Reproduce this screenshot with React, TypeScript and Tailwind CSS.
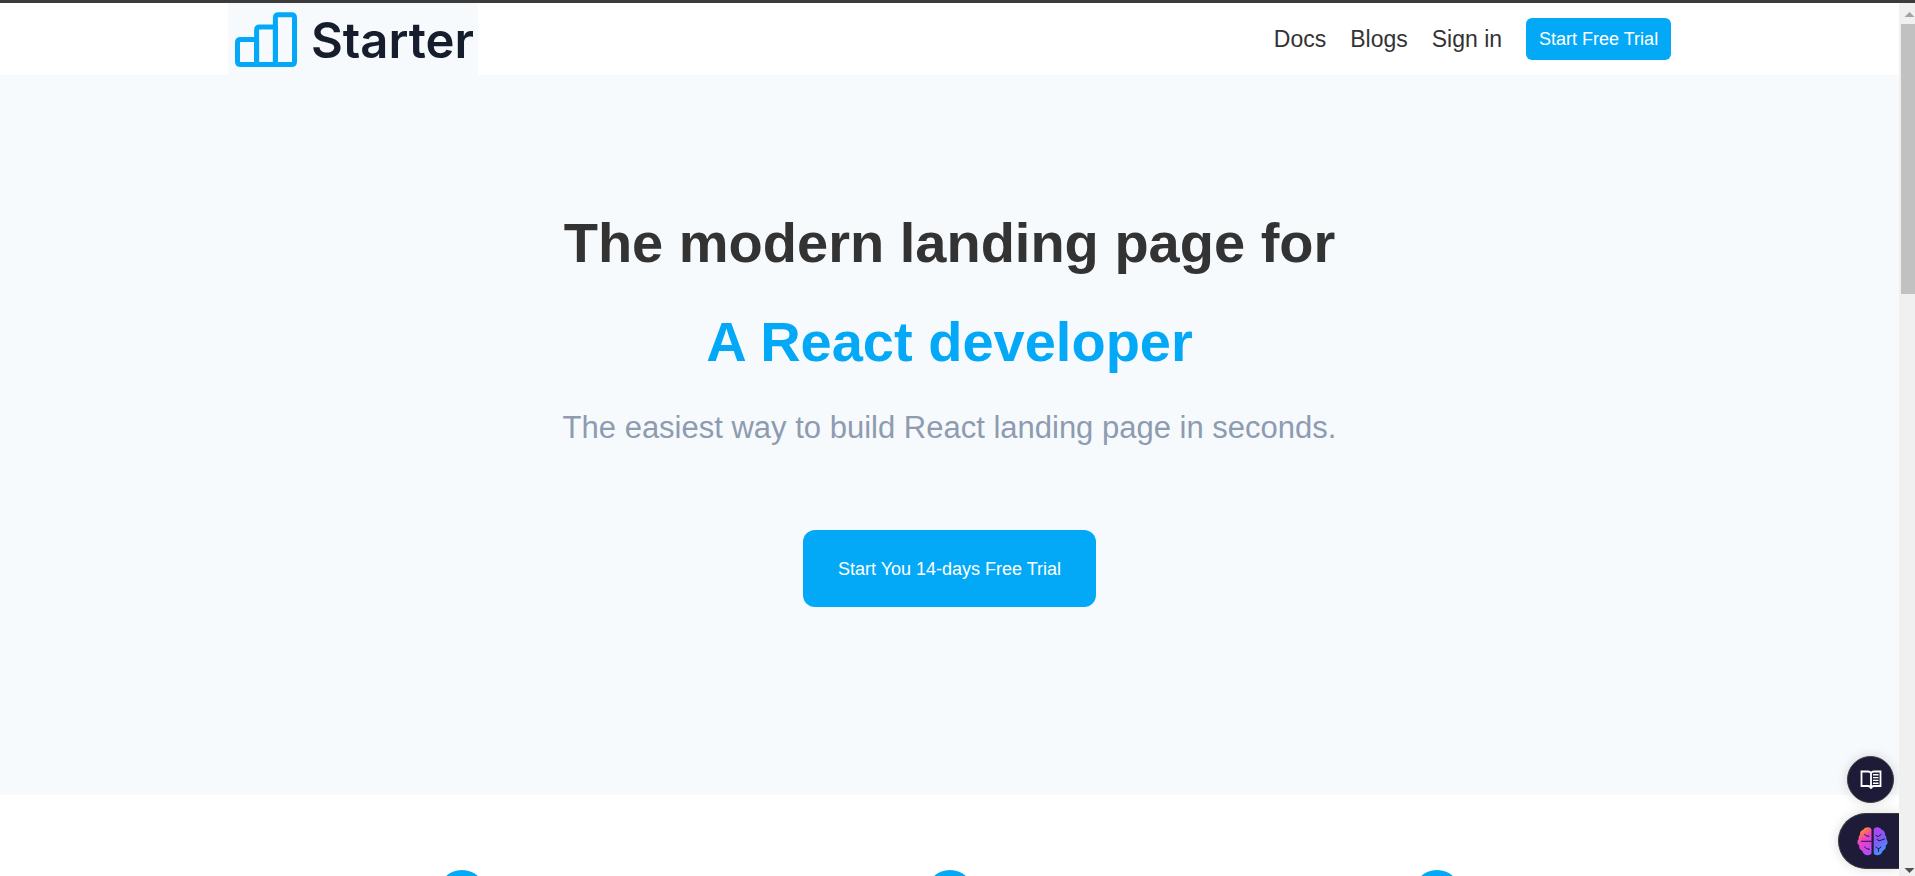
import React from 'react';

const navLinks = ['Docs', 'Blogs', 'Sign in'];
const features = ['Fast', 'Simple', 'Reliable'];

function Logo() {
  return (
    <a href="#home" className="flex w-[250px] items-center gap-3.5 self-stretch bg-[#f6fafd] pt-0.5 pl-[7px] font-['Inter',sans-serif] text-[49px] font-semibold leading-none text-[#161e2e]">
      <svg viewBox="0 0 62 56" className="h-14 w-[62px] shrink-0" fill="none" stroke="#03a9f7" strokeWidth="5" strokeLinejoin="round" aria-hidden="true">
        <path d="M21.6 27.4H5.5q-3 0-3 3v19.1q0 3 3 3h16.1z" />
        <path d="M40.4 15.1H24.6q-3 0-3 3v34.4h18.8z" />
        <path d="M43.4 2.800h13.100q3 0 3 3v43.700q0 3-3 3H40.400V5.800q0-3 3-3z" />
      </svg>
      <span>Starter</span>
    </a>
  );
}

function Header() {
  return (
    <header className="flex h-[72px] shrink-0 items-center justify-between bg-white px-[12%]">
      <Logo />
      <nav className="flex items-center gap-6 text-[23px] text-[#333333]">
        {navLinks.map((label) => (
          <a key={label} href="#nav">{label}</a>
        ))}
        <button type="button" className="h-[42px] rounded-md bg-[#03a9f7] px-[13px] text-lg text-white">
          Start Free Trial
        </button>
      </nav>
    </header>
  );
}

function Hero() {
  return (
    <section className="flex h-[720px] shrink-0 flex-col items-center bg-[#f6fafd] pt-[118px] text-center">
      <h1 className="text-[56px] font-bold leading-[99px] text-[#333333]">
        The modern landing page for
        <span className="block text-[#03a9f7]">A React developer</span>
      </h1>
      <p className="mt-[13px] text-[31px] leading-[48px] text-[#8e9bb0]">
        The easiest way to build React landing page in seconds.
      </p>
      <button type="button" className="mt-[78px] h-[77px] w-[293px] rounded-xl bg-[#03a9f7] text-lg text-white">
        Start You 14-days Free Trial
      </button>
    </section>
  );
}

function Features() {
  return (
    <section className="grid grid-cols-3 gap-5 bg-white px-[12%] pt-[75px]">
      {features.map((name) => (
        <div key={name} className="flex justify-center">
          <div className="size-12 rounded-full bg-[#03a9f7]" />
        </div>
      ))}
    </section>
  );
}

function BookIcon() {
  return (
    <svg viewBox="0 0 22 20" className="h-5 w-[22px]" fill="none" stroke="#fff" strokeWidth="1.8" aria-hidden="true">
      <path d="M11 3Q10 1.500 8 1.500H1.500v14.500H8q2.500 0 3 2.500q.5-2.500 3-2.500h6.500V1.500H14q-2 0-3 1.500zV18" />
      <path d="M13 4.800h5.500M13 7.600h5.500M13 10.400h5.500M13 13.200h5.500" strokeWidth="1.4" />
    </svg>
  );
}

function BrainIcon() {
  return (
    <svg viewBox="0 0 31 29" className="h-[29px] w-[31px]" aria-hidden="true">
      <defs>
        <linearGradient id="brainLeft" x1="0.2" y1="0" x2="0.6" y2="1">
          <stop offset="0" stopColor="#ff9a1f" />
          <stop offset="0.2" stopColor="#fb7a4a" />
          <stop offset="0.45" stopColor="#f040c8" />
          <stop offset="1" stopColor="#b44cf5" />
        </linearGradient>
        <linearGradient id="brainRight" x1="0.2" y1="0" x2="0.6" y2="1">
          <stop offset="0" stopColor="#b443ee" />
          <stop offset="0.5" stopColor="#7d5df5" />
          <stop offset="1" stopColor="#3b9cff" />
        </linearGradient>
      </defs>
      <path fill="url(#brainLeft)" d="M14.5 2.5C14 1 12.500.3 10.800.3 8.700.3 7.200 1.200 6.600 2.600 4 3.200 2.600 5.500 3 8 1.800 9 1.400 10.500 1.800 12-.2 13.800 0 17 2.200 18.500c-.2 2.700.8 4.400 3 5.200 1 2.900 3 4.600 5.600 4.600 1.900 0 3.200-.7 3.700-2z" />
      <path fill="url(#brainRight)" d="M16.7 2.5C17.200 1 18.500.3 20.200.3c2.100 0 3.600.9 4.200 2.300 2.600.6 4 2.900 3.600 5.400 1.200 1 1.600 2.500 1.200 4 2 1.800 1.800 5-.4 6.500.2 2.700-.8 4.400-3 5.200-1 2.900-3 4.600-5.600 4.600-1.900 0-3-.7-3.500-2z" />
      <path fill="none" stroke="#1e1b39" strokeWidth="1" strokeLinecap="round" d="M4.500 14.300h10M7.500 7.500q1.500 2 4.500 1.800M7.500 20q1.500 2.300 5 2.300M19 8.500l2.500 1L24 7.500M20 12.500q2 2.500 4.500.5l3-1M19 20l2.500 2L24 20M21.500 22v2.500" />
    </svg>
  );
}

function Scrollbar() {
  return (
    <div className="flex w-4 shrink-0 flex-col items-center bg-[#f0f0f0] pl-0.5" aria-hidden="true">
      <svg viewBox="0 0 14 21" className="h-[21px] w-3.5"><path d="M3.500 14h10L8.500 9z" fill="#a3a3a3" /></svg>
      <div className="h-[270px] w-full bg-[#c1c1c1]" />
      <svg viewBox="0 0 14 10" className="mt-auto h-2.5 w-3.5"><path d="M3.500 2h10l-5 5z" fill="#505050" /></svg>
    </div>
  );
}

export default function App() {
  return (
    <div className="flex h-screen flex-col overflow-hidden font-['Liberation_Sans',Arial,sans-serif]">
      <div className="h-[3px] shrink-0 bg-[#3b3b3b]" />
      <div className="flex min-h-0 flex-1">
        <main className="relative flex min-w-0 flex-1 flex-col overflow-hidden bg-white">
          <Header />
          <Hero />
          <Features />
          <div className="absolute right-0 bottom-[7px] flex flex-col items-end gap-2.5">
            <button type="button" aria-label="Open guide" className="mr-[5px] flex size-[47px] items-center justify-center rounded-full border border-[#3a3a3a] bg-[#1e1b39] shadow-[0_0_12px_rgba(0,0,0,0.15)]">
              <BookIcon />
            </button>
            <button type="button" aria-label="Open assistant" className="flex h-14 w-[61px] items-center justify-center rounded-l-full border border-r-0 border-[#3a3a3a] bg-[#1e1b39] pl-1.5 shadow-[0_0_12px_rgba(0,0,0,0.15)]">
              <BrainIcon />
            </button>
          </div>
        </main>
        <Scrollbar />
      </div>
    </div>
  );
}
